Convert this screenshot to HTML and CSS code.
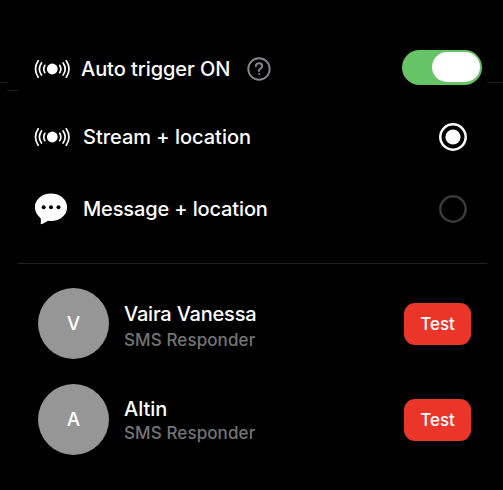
FILE: index.html
```html
<!DOCTYPE html>
<html lang="en">
<head>
<meta charset="utf-8">
<title>Auto trigger</title>
<link rel="stylesheet" href="styles.css">
</head>
<body>
<svg class="defs" width="0" height="0" aria-hidden="true">
  <symbol id="broadcast" viewBox="0 0 36 20">
    <circle cx="18.300" cy="10" r="5.4" fill="currentColor"/>
    <g fill="none" stroke="currentColor" stroke-width="1.7" stroke-linecap="round">
      <path d="M10.800 6.300Q8.700 10 10.800 13.700M7.500 4Q3.300 10 7.500 16M4.200 1.800Q-1.200 10 4.200 18.200"/>
      <path d="M25.800 6.300Q27.900 10 25.800 13.700M29.100 4Q33.300 10 29.100 16M32.300 1.800Q37.700 10 32.300 18.200"/>
    </g>
  </symbol>
</svg>
<main class="panel">
  <i class="edge edge-left"></i><i class="edge edge-inner"></i><i class="edge edge-right"></i>
  <section class="options">
    <div class="option option-toggle">
      <svg class="icon"><use href="#broadcast"/></svg>
      <span class="label label-auto">Auto trigger ON</span>
      <svg class="help" viewBox="0 0 24 24" fill="none" stroke="#85858a" stroke-width="1.9" stroke-linecap="round" stroke-linejoin="round">
        <circle cx="12" cy="12" r="10.7"/>
        <path d="M8.8 9.2C8.9 7.3 10.2 6.3 12 6.3C13.9 6.3 15.2 7.4 15.2 9C15.2 10.5 14.2 11.1 13.3 11.7C12.3 12.4 12 12.8 12 14"/>
        <circle cx="12" cy="17.1" r=".5" fill="#85858a" stroke-width="1"/>
      </svg>
      <span class="switch"><span class="knob"></span></span>
    </div>
    <div class="option">
      <svg class="icon"><use href="#broadcast"/></svg>
      <span class="label label-stream">Stream + location</span>
      <svg class="radio radio-on" viewBox="0 0 28 28"><circle class="ring" cx="14" cy="14" r="12.700"/><circle class="dot" cx="14" cy="14" r="7.600"/></svg>
    </div>
    <div class="option option-message">
      <svg class="bubble" viewBox="0 0 34 32">
        <path fill="#fff" d="M17 .6C7.900 .6 .9 6.500 .9 14.300C.9 18.800 3.100 22.400 6.500 24.900C7.100 26.500 6.900 28.300 6.700 31.200C9.300 30.600 12.200 29.200 14 27.700C15 27.900 16 28 17 28C26.100 28 33.100 22.100 33.100 14.300S26.100 .6 17 .6Z"/>
        <g fill="#000"><circle cx="9.700" cy="14.300" r="2"/><circle cx="17" cy="14.300" r="2"/><circle cx="24.500" cy="14.300" r="2"/></g>
      </svg>
      <span class="label label-message">Message + location</span>
      <svg class="radio" viewBox="0 0 28 28"><circle class="ring" cx="14" cy="14" r="12.700"/></svg>
    </div>
  </section>
  <section class="contacts">
    <div class="contact">
      <span class="avatar">V</span>
      <div class="person"><span class="name name-vaira">Vaira Vanessa</span><span class="role">SMS Responder</span></div>
      <button class="test">Test</button>
    </div>
    <div class="contact contact-altin">
      <span class="avatar">A</span>
      <div class="person"><span class="name">Altin</span><span class="role">SMS Responder</span></div>
      <button class="test">Test</button>
    </div>
  </section>
</main>
</body>
</html>
```
FILE: styles.css
```css
* { box-sizing: border-box; }
body { margin: 0; background: #000; color: #fff; font-family: Inter, "Liberation Sans", sans-serif; }
.defs { position: absolute; }
.panel { position: relative; height: 490px; padding: 35px 16px 0 18px; overflow: hidden; }
.edge { position: absolute; height: 1px; background: #202020; }
.edge-left { top: 82px; left: 0; width: 7px; }
.edge-inner { top: 90px; left: 7px; width: 11px; }
.edge-right { top: 82px; right: 0; width: 16px; }
.options { height: 229px; padding: 0 20px 0 16px; border-bottom: 1px solid #242424; }
.option { display: flex; align-items: center; height: 68px; }
.option-toggle { margin-right: -15px; }
.option-message { height: 76px; }
.icon { width: 36px; height: 20px; margin-right: 13px; flex: none; }
.label { font-size: 20px; line-height: 24px; font-weight: 550; white-space: nowrap; }
.label-auto { margin-left: -2px; letter-spacing: -.05px; }
.label-stream { letter-spacing: -.02px; }
.label-message { letter-spacing: -.14px; }
.help { width: 24px; height: 24px; margin-left: 17px; }
.switch { display: flex; justify-content: flex-end; width: 80px; height: 35px; margin: -4px 0 0 auto; padding: 2.500px; border-radius: 18px; background: #67c466; }
.knob { width: 48px; height: 30px; border-radius: 15px; background: #fff; }
.radio { width: 28px; height: 28px; margin-left: auto; color: #3a3a3a; }
.radio-on { color: #fff; }
.ring { fill: none; stroke: currentColor; stroke-width: 2.500; }
.dot { fill: currentColor; }
.bubble { width: 34px; height: 32px; margin-right: 15px; flex: none; }
.contacts { padding: 12px 16px 0 20px; }
.contact { display: flex; align-items: center; height: 95px; }
.contact-altin { height: 96px; }
.avatar { display: grid; place-items: center; width: 71px; height: 71px; margin-right: 15px; border-radius: 50%; background: #969696; font-size: 19px; font-weight: 550; }
.person { display: flex; flex-direction: column; gap: 2px; padding-top: 6px; }
.contact-altin .person { gap: 0; padding-top: 4px; }
.name { font-size: 20px; line-height: 24px; font-weight: 550; }
.name-vaira { letter-spacing: -.2px; }
.role { font-size: 17px; line-height: 24px; font-weight: 500; letter-spacing: .1px; color: #747476; }
.test { width: 67px; height: 42px; margin-left: auto; padding: 0; border: 0; border-radius: 11px; background: #eb3529; color: #fff; font: 550 17px/24px Inter, sans-serif; }
.contact-altin .test { margin-top: 1px; }
```
